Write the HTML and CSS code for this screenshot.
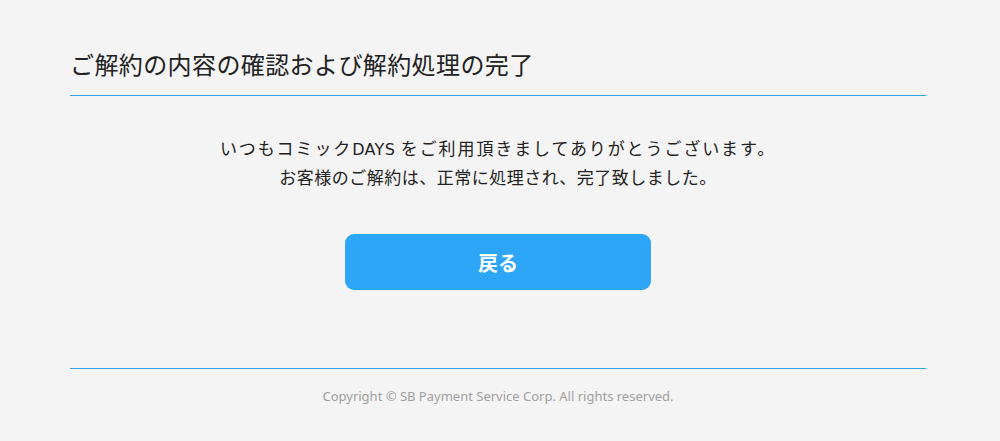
FILE: index.html
```html
<!DOCTYPE html>
<html lang="ja">
<head>
<meta charset="utf-8">
<link rel="stylesheet" href="styles.css">
</head>
<body>
<div class="page">
  <h1 class="title">ご解約の内容の確認および解約処理の完了</h1>
  <div class="message">
    <p class="message-lead">いつもコミック<span class="brand">DAYS</span> をご利用頂きましてありがとうございます。</p>
    <p>お客様のご解約は、正常に処理され、完了致しました。</p>
  </div>
  <div class="actions">
    <a class="btn" href="#">戻る</a>
  </div>
  <footer class="footer">Copyright © SB Payment Service Corp. All rights reserved.</footer>
</div>
</body>
</html>
```
FILE: styles.css
```css
html, body {
  margin: 0;
  padding: 0;
  background: #f4f4f4;
}
body {
  font-family: "Noto Sans CJK JP", "Noto Sans", sans-serif;
  color: #222;
}
.page {
  margin: 0 74px 0 70px;
  padding-top: 46px;
}
.title {
  margin: 0;
  font-size: 24px;
  font-weight: normal;
  line-height: 36px;
  letter-spacing: 0.4px;
  padding-bottom: 13px;
  border-bottom: 1px solid #3aa3e3;
  color: #222;
}
.message {
  margin-top: 37px;
  text-align: center;
  font-size: 17px;
  line-height: 29px;
  letter-spacing: 0.5px;
}
.message p {
  margin: 0;
  height: 29px;
}
.message .message-lead {
  letter-spacing: 1.9px;
}
.brand {
  font-family: "DejaVu Sans", "Noto Sans", sans-serif;
  letter-spacing: 0.3px;
  font-size: 16px;
  line-height: 1;
}
.actions {
  display: flex;
  justify-content: center;
  margin-top: 43px;
}
.btn {
  display: flex;
  align-items: center;
  justify-content: center;
  width: 306px;
  height: 56px;
  border-radius: 9px;
  background: #2ea6f8;
  color: #fff;
  font-weight: bold;
  font-size: 20px;
  text-decoration: none;
}
.footer {
  margin-top: 78px;
  border-top: 1px solid #3aa3e3;
  text-align: center;
  font-size: 13px;
  color: #a0a0a0;
  padding-top: 18px;
  font-family: "Noto Sans", "Noto Sans CJK JP", sans-serif;
}
```
